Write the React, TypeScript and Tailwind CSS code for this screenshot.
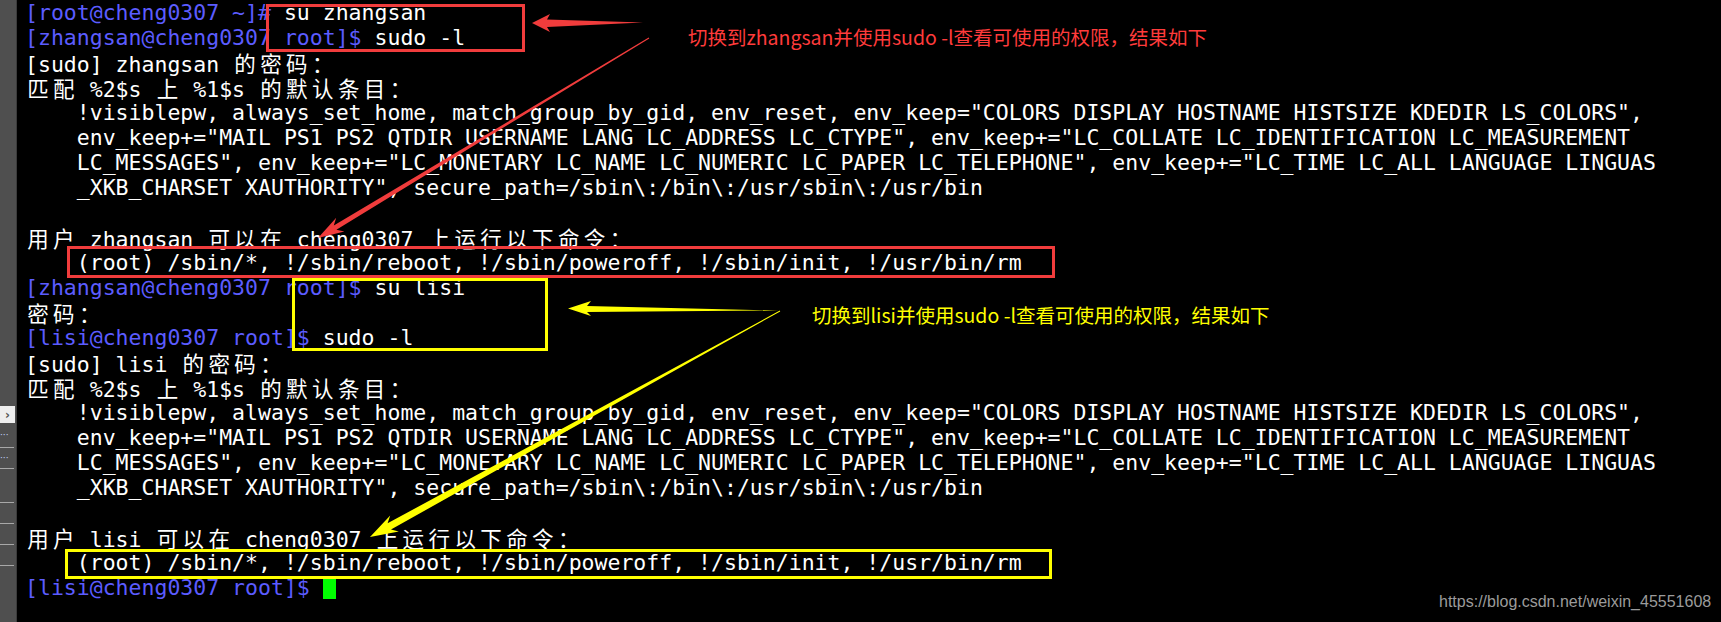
import React from "react";

type Seg = { t: string; c?: "prompt" | "text" };
type Line = Seg[];

const isWide = (ch: string) => /[\u3000-\u9fff\uff00-\uffef]/.test(ch);

// terminal cell renderer: CJK glyphs take two cells
function Cells({ text }: { text: string }) {
  const out: React.ReactNode[] = [];
  let buf = "";
  let k = 0;
  for (const ch of text) {
    if (isWide(ch)) {
      if (buf) {
        out.push(<span key={k++}>{buf}</span>);
        buf = "";
      }
      out.push(
        <span
          key={k++}
          className="inline-block w-[25.9px] text-center font-['Noto_Sans_CJK_SC',sans-serif]"
        >
          {ch}
        </span>
      );
    } else {
      buf += ch;
    }
  }
  if (buf) out.push(<span key={k++}>{buf}</span>);
  return <>{out}</>;
}

const p = (t: string): Seg => ({ t, c: "prompt" });
const w = (t: string): Seg => ({ t, c: "text" });

const sudoDefaults: Line[] = [
  [w("匹配 %2$s 上 %1$s 的默认条目：")],
  [
    w(
      '    !visiblepw, always_set_home, match_group_by_gid, env_reset, env_keep="COLORS DISPLAY HOSTNAME HISTSIZE KDEDIR LS_COLORS",'
    ),
  ],
  [
    w(
      '    env_keep+="MAIL PS1 PS2 QTDIR USERNAME LANG LC_ADDRESS LC_CTYPE", env_keep+="LC_COLLATE LC_IDENTIFICATION LC_MEASUREMENT'
    ),
  ],
  [
    w(
      '    LC_MESSAGES", env_keep+="LC_MONETARY LC_NAME LC_NUMERIC LC_PAPER LC_TELEPHONE", env_keep+="LC_TIME LC_ALL LANGUAGE LINGUAS'
    ),
  ],
  [w('    _XKB_CHARSET XAUTHORITY", secure_path=/sbin\\:/bin\\:/usr/sbin\\:/usr/bin')],
  [w("")],
];

const rules = "    (root) /sbin/*, !/sbin/reboot, !/sbin/poweroff, !/sbin/init, !/usr/bin/rm";

const lines: Line[] = [
  [p("[root@cheng0307 ~]#"), w(" su zhangsan")],
  [p("[zhangsan@cheng0307 root]$"), w(" sudo -l")],
  [w("[sudo] zhangsan 的密码：")],
  ...sudoDefaults,
  [w("用户 zhangsan 可以在 cheng0307 上运行以下命令：")],
  [w(rules)],
  [p("[zhangsan@cheng0307 root]$"), w(" su lisi")],
  [w("密码：")],
  [p("[lisi@cheng0307 root]$"), w(" sudo -l")],
  [w("[sudo] lisi 的密码：")],
  ...sudoDefaults,
  [w("用户 lisi 可以在 cheng0307 上运行以下命令：")],
  [w(rules)],
];

function SideStrip() {
  return (
    <div className="w-[17px] shrink-0 h-full bg-[#4f4f4f] border-r border-[#3c3c3c] flex flex-col pt-[406px]">
      <div className="h-[17px] w-[15px] bg-[#eeeeee] flex items-center justify-center text-[12px] leading-none text-[#555] font-['DejaVu_Sans',sans-serif] font-bold">
        ›
      </div>
      <div className="h-[24px] flex items-center text-[9px] leading-none text-[#c9d6ff] font-['DejaVu_Sans',sans-serif]">
        ···
      </div>
      <div className="h-px w-[14px] bg-[#a8a8a8]" />
      <div className="h-[20px] flex items-center text-[9px] leading-none text-[#c9d6ff] font-['DejaVu_Sans',sans-serif]">
        ···
      </div>
      <div className="h-px w-[14px] bg-[#a8a8a8]" />
      <div className="h-[33px]" />
      <div className="h-px w-[14px] bg-[#a8a8a8]" />
      <div className="h-[20px]" />
      <div className="h-px w-[14px] bg-[#a8a8a8]" />
      <div className="h-[20px]" />
      <div className="h-px w-[14px] bg-[#a8a8a8]" />
      <div className="h-[20px]" />
      <div className="h-px w-[14px] bg-[#a8a8a8]" />
    </div>
  );
}

function Arrows() {
  return (
    <svg
      className="absolute left-0 top-0 pointer-events-none"
      width="1721"
      height="622"
      viewBox="0 0 1721 622"
    >
      {/* red callout arrows */}
      <polygon
        fill="#f03c3c"
        points="532,23 550,14 547,19.5 643,22.5 547,27 550,32"
      />
      <polygon
        fill="#f03c3c"
        points="318,238 336.2,217.8 333.8,225.6 648.7,37.6 649.3,38.4 336.4,229.8 344.4,231.4"
      />
      {/* yellow callout arrows */}
      <polygon
        fill="#ffff00"
        points="568,308.5 591,301 587,306 779,310.5 587,312 591,316"
      />
      <polygon
        fill="#ffff00"
        points="370,537 390.2,515.6 387.6,523.3 779.8,310.6 780.2,311.4 391,529.5 398.8,531.4"
      />
    </svg>
  );
}

export default function App() {
  return (
    <div className="relative w-full h-[622px] bg-black flex overflow-hidden">
      <SideStrip />
      <div className="flex-1 pl-[8px] font-['DejaVu_Sans_Mono','Noto_Sans_CJK_SC',monospace] text-[21.5px] text-white whitespace-pre">
        {lines.map((line, i) => (
          <div key={i} className="h-[25px] leading-[25px]">
            {line.map((seg, j) => (
              <span key={j} className={seg.c === "prompt" ? "text-[#5c5cff]" : "text-white"}>
                <Cells text={seg.t} />
              </span>
            ))}
          </div>
        ))}
        <div className="h-[25px] leading-[25px] flex items-center">
          <span className="text-[#5c5cff]">[lisi@cheng0307 root]$</span>
          <span> </span>
          <span className="inline-block w-[13px] h-[23px] bg-[#00ff00]" />
        </div>
      </div>

      {/* annotation boxes */}
      <div className="absolute left-[266px] top-[4px] w-[259px] h-[48px] border-[3px] border-[#f03c3c]" />
      <div className="absolute left-[67px] top-[246px] w-[988px] h-[32px] border-[3px] border-[#f03c3c]" />
      <div className="absolute left-[292px] top-[278px] w-[256px] h-[73px] border-[3px] border-[#ffff00]" />
      <div className="absolute left-[65px] top-[549px] w-[987px] h-[30px] border-[3px] border-[#ffff00]" />

      <Arrows />

      <div className="absolute left-[688px] top-[25px] text-[19.5px] leading-[24px] text-[#ff3b3b] font-['Noto_Sans_CJK_SC',sans-serif] whitespace-nowrap">
        切换到zhangsan并使用sudo -l查看可使用的权限，结果如下
      </div>
      <div className="absolute left-[812px] top-[303px] text-[19.5px] leading-[24px] text-[#ffff00] font-['Noto_Sans_CJK_SC',sans-serif] whitespace-nowrap">
        切换到lisi并使用sudo -l查看可使用的权限，结果如下
      </div>

      <div className="absolute left-[1439px] top-[592px] text-[16px] leading-[20px] text-[#9b9b9b] font-['Liberation_Sans_Narrow','Liberation_Sans',sans-serif] whitespace-nowrap">
        https://blog.csdn.net/weixin_45551608
      </div>
    </div>
  );
}
